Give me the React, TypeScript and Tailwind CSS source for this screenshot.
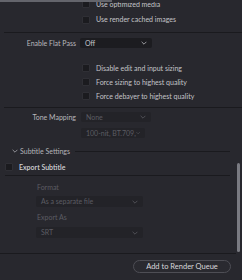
import React from "react";

function Chevron({ className = "" }: { className?: string }) {
  return (
    <svg width="6" height="4" viewBox="0 0 6 4" className={className}>
      <polyline points="0.6,0.8 3,3.2 5.4,0.8" fill="none" stroke="currentColor" strokeWidth="0.9" />
    </svg>
  );
}

function Check({ label, bright }: { label: string; bright?: boolean }) {
  return (
    <div className="flex items-center gap-[6px] whitespace-nowrap">
      <div className="w-[8px] h-[8px] bg-[#1b1b1f] border border-[#2f2f35] rounded-[1px]" />
      <span className={bright ? "text-[#d4d4d8] font-semibold" : "text-[#c4c4c8]"}>{label}</span>
    </div>
  );
}

function Select({ value, w, dim }: { value: string; w: string; dim?: boolean }) {
  return (
    <div
      className={`${w} h-full flex items-center justify-between pl-[5px] pr-[5px] rounded-[2px] whitespace-nowrap ${
        dim ? "bg-[#232328] text-[#5c5c63]" : "bg-[#1c1c20] text-[#c4c4c8]"
      }`}
    >
      <span>{value}</span>
      <Chevron className={dim ? "text-[#55555b]" : "text-[#a8a8ad]"} />
    </div>
  );
}

export default function App() {
  return (
    <div
      className="relative w-[242px] h-[280px] overflow-hidden bg-[#28282e] text-[7px] leading-none"
      style={{ fontFamily: 'Lato, "Liberation Sans", sans-serif' }}
    >
      <div className="absolute top-0 left-0 w-[112px] h-[2px] bg-[#64656c] z-10" />
      <div className="absolute top-0 left-0 w-[242px] h-[2px] bg-[#28282e]" />
      <div className="absolute left-[237px] top-[163px] w-[3px] h-[89px] rounded-full bg-[#7a7b82]" />

      <div className="flex flex-col -mt-[4px]">
        <div className="h-[16px] flex items-center pl-[82px]">
          <Check label="Use optimized media" />
        </div>
        <div className="h-[15px] flex items-center pl-[82px]">
          <Check label="Use render cached images" />
        </div>

        <div className="mt-[5px] ml-[4px] h-px bg-[#1a1a1e]" />

        <div className="mt-[5px] h-[10px] flex items-center">
          <span className="w-[76px] text-right text-[#b8b8bc]">Enable Flat Pass</span>
          <div className="ml-[4px] h-full">
            <Select value="Off" w="w-[72px]" />
          </div>
        </div>

        <div className="mt-[13px] flex flex-col pl-[82px]">
          <div className="h-[14px] flex items-center">
            <Check label="Disable edit and input sizing" />
          </div>
          <div className="h-[14px] flex items-center">
            <Check label="Force sizing to highest quality" />
          </div>
          <div className="h-[14px] flex items-center">
            <Check label="Force debayer to highest quality" />
          </div>
        </div>

        <div className="mt-[4px] ml-[4px] h-px bg-[#1a1a1e]" />

        <div className="mt-[4px] h-[10px] flex items-center">
          <span className="w-[76px] text-right text-[#b8b8bc]">Tone Mapping</span>
          <div className="ml-[5px] h-full">
            <Select value="None" w="w-[70px]" dim />
          </div>
        </div>
        <div className="mt-[6px] h-[10px] pl-[81px]">
          <Select value="100-nit, BT.709," w="w-[64px]" dim />
        </div>

        <div className="mt-[8px] h-[10px] flex items-center pl-[12px] pr-[12px]">
          <Chevron className="text-[#9a9aa0]" />
          <span className="ml-[2px] text-[#b4b4b8]">Subtitle Settings</span>
          <div className="ml-[5px] flex-1 h-px bg-[#1a1a1e]" />
        </div>

        <div className="mt-[6px] h-[10px] flex items-center pl-[5px]">
          <Check label="Export Subtitle" bright />
        </div>
        <div className="mt-[3px] ml-[5px] mr-[12px] h-px bg-[#1a1a1e]" />

        <div className="pl-[37px] flex flex-col">
          <div className="mt-[6px] h-[10px] flex items-center text-[#5c5c63]">Format</div>
          <div className="mt-[4px] h-[11px] -ml-[1px]">
            <Select value="As a separate file" w="w-[107px]" dim />
          </div>
          <div className="mt-[5px] h-[10px] flex items-center text-[#5c5c63]">Export As</div>
          <div className="mt-[5px] h-[11px] -ml-[1px]">
            <Select value="SRT" w="w-[107px]" dim />
          </div>
        </div>

        <div className="mt-[15px] mr-[6px] h-px bg-[#1a1a1e]" />

        <div className="mt-[6px] flex justify-end pr-[11px]">
          <button className="w-[98px] h-[13px] rounded-full border border-[#4e4e55] bg-[#2a2a30] text-[#d8d8dc] text-[7.5px] flex items-center justify-center">
            Add to Render Queue
          </button>
        </div>
      </div>
    </div>
  );
}
